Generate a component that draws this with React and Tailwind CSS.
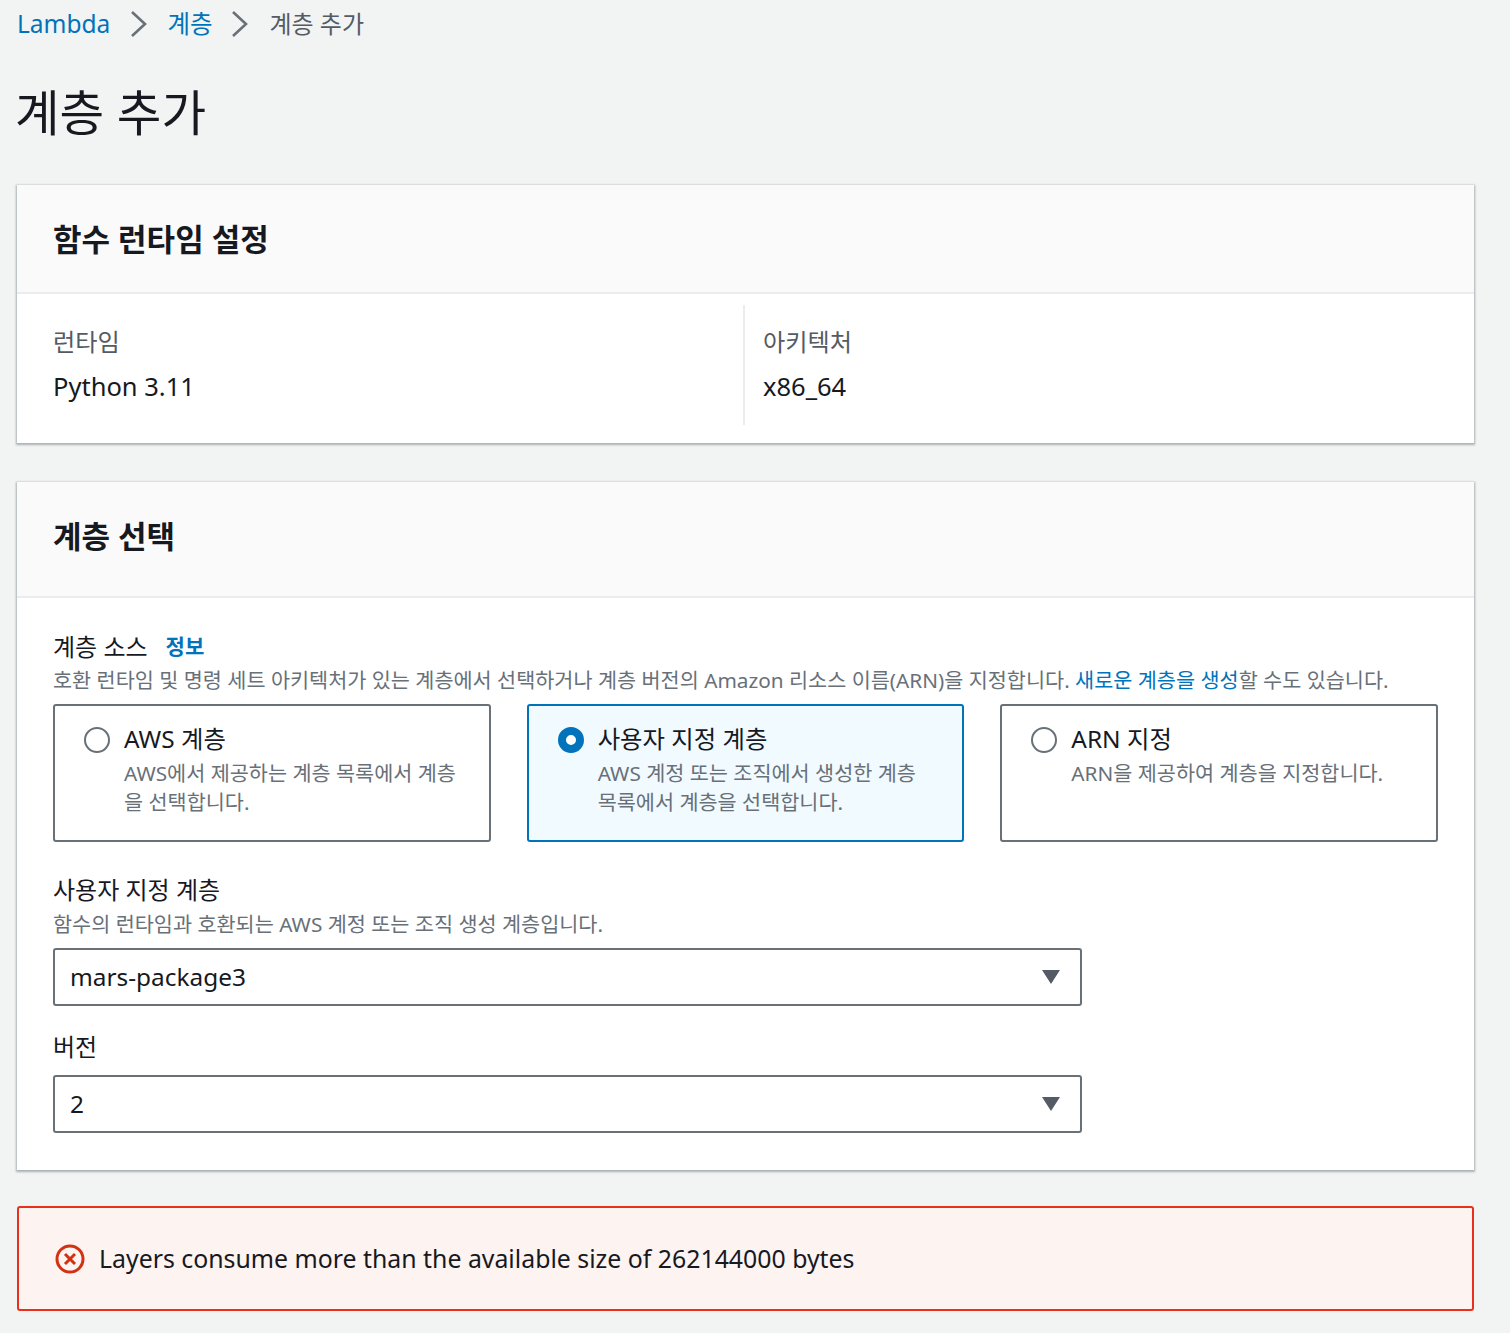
function Chevron() {
  return (
    <svg width="18" height="28" viewBox="0 0 18 28" fill="none" className="shrink-0">
      <path d="M2 2l13 12L2 26" stroke="#687078" strokeWidth="2.6" />
    </svg>
  );
}

function Caret() {
  return (
    <svg width="20" height="16" viewBox="0 0 20 16" className="shrink-0">
      <path d="M1 1h18L10 15z" fill="#545b64" />
    </svg>
  );
}

function RadioCard({ title, desc, selected }) {
  return (
    <div
      className={
        selected
          ? "h-[138px] border-2 border-[#0073bb] bg-[#f1faff] rounded-[3px] pl-[29px] pr-[20px] pt-[17px] flex gap-[14px]"
          : "h-[138px] border-2 border-[#687078] bg-white rounded-[3px] pl-[29px] pr-[20px] pt-[17px] flex gap-[14px]"
      }
    >
      {selected ? (
        <div className="w-[26px] h-[26px] mt-[4px] rounded-full border-[8px] border-[#0073bb] bg-white shrink-0"></div>
      ) : (
        <div className="w-[26px] h-[26px] mt-[4px] rounded-full border-2 border-[#687078] bg-white shrink-0"></div>
      )}
      <div>
        <div className="text-[24.4px] leading-[32px] text-[#16191f]">{title}</div>
        <div className="text-[20.75px] leading-[29px] mt-[4px] text-[#687078] whitespace-pre-line">{desc}</div>
      </div>
    </div>
  );
}

function SelectBox({ value }) {
  return (
    <div className="w-[1029px] h-[58px] border-2 border-[#687078] rounded-[3px] bg-white pl-[15px] pr-[19px] flex items-center justify-between text-[24.4px] text-[#16191f]">
      <span>{value}</span>
      <Caret />
    </div>
  );
}

export default function App() {
  return (
    <div className="w-[1510px] h-[1333px] overflow-hidden bg-[#f2f3f3] pl-[17px] pr-[36px] font-['Noto_Sans','Noto_Sans_CJK_KR',sans-serif] text-[#16191f]">
      <div className="h-[48px] flex items-center text-[24.5px]">
        <span className="text-[#0073bb]">Lambda</span>
        <span className="ml-[20px] mr-[19px]"><Chevron /></span>
        <span className="text-[#0073bb]">계층</span>
        <span className="ml-[19px] mr-[20px]"><Chevron /></span>
        <span className="text-[#545b64] text-[24px]">계층 추가</span>
      </div>

      <h1 className="h-[137px] pt-[31px] -ml-[2px] text-[48.5px] leading-[66px]">계층 추가</h1>

      <div className="h-[258px] bg-white shadow-[0_1px_2px_1px_rgba(0,28,36,0.3)]">
        <div className="h-[109px] bg-[#fafafa] border-b-2 border-[#eaeded] pl-[36px] pt-[2px] flex items-center">
          <h2 className="text-[31px] font-bold">함수 런타임 설정</h2>
        </div>
        <div className="flex pt-[11px]">
          <div className="w-[726px] h-[120px] pl-[36px] pt-[15px]">
            <div className="text-[24.2px] leading-[44px] text-[#545b64]">런타임</div>
            <div className="text-[25.5px] leading-[44px]">Python 3.11</div>
          </div>
          <div className="h-[120px] border-l-2 border-[#eaeded] pl-[18px] pt-[15px]">
            <div className="text-[24.2px] leading-[44px] text-[#545b64]">아키텍처</div>
            <div className="text-[25.5px] leading-[44px]">x86_64</div>
          </div>
        </div>
      </div>

      <div className="mt-[39px] h-[688px] bg-white shadow-[0_1px_2px_1px_rgba(0,28,36,0.3)]">
        <div className="h-[116px] bg-[#fafafa] border-b-2 border-[#eaeded] pl-[36px] pb-[6px] flex items-center">
          <h2 className="text-[31px] font-bold">계층 선택</h2>
        </div>
        <div className="pl-[36px] pr-[36px] pt-[32px]">
          <div className="flex items-center h-[34px] text-[24px]">
            <span>계층 소스</span>
            <span className="ml-[18px] text-[21px] font-bold text-[#0073bb]">정보</span>
          </div>
          <div className="h-[40px] text-[20.75px] leading-[32px] text-[#687078] whitespace-nowrap">
            호환 런타임 및 명령 세트 아키텍처가 있는 계층에서 선택하거나 계층 버전의 Amazon 리소스 이름(ARN)을 지정합니다.{" "}
            <span className="text-[#0073bb]">새로운 계층을 생성</span>할 수도 있습니다.
          </div>
          <div className="grid grid-cols-3 gap-[36px]">
            <RadioCard title="AWS 계층" desc={"AWS에서 제공하는 계층 목록에서 계층\n을 선택합니다."} />
            <RadioCard title="사용자 지정 계층" desc={"AWS 계정 또는 조직에서 생성한 계층\n목록에서 계층을 선택합니다."} selected />
            <RadioCard title="ARN 지정" desc="ARN을 제공하여 계층을 지정합니다." />
          </div>
          <div className="mt-[31px] text-[24px] leading-[34px]">사용자 지정 계층</div>
          <div className="h-[41px] pt-[1px] text-[20.75px] leading-[32px] text-[#687078]">함수의 런타임과 호환되는 AWS 계정 또는 조직 생성 계층입니다.</div>
          <SelectBox value="mars-package3" />
          <div className="mt-[23px] h-[46px] pt-[1px] text-[24px] leading-[34px]">버전</div>
          <SelectBox value="2" />
        </div>
      </div>

      <div className="mt-[36px] h-[105px] border-2 border-[#e8301c] bg-[#fdf3f1] rounded-[3px] pl-[36px] flex items-center gap-[14px]">
        <svg width="30" height="30" viewBox="0 0 30 30" fill="none" className="shrink-0">
          <circle cx="15" cy="15" r="13" stroke="#d13212" strokeWidth="3" />
          <path d="M10 10l10 10M20 10L10 20" stroke="#d13212" strokeWidth="3" />
        </svg>
        <span className="text-[24.85px]">Layers consume more than the available size of 262144000 bytes</span>
      </div>
    </div>
  );
}
